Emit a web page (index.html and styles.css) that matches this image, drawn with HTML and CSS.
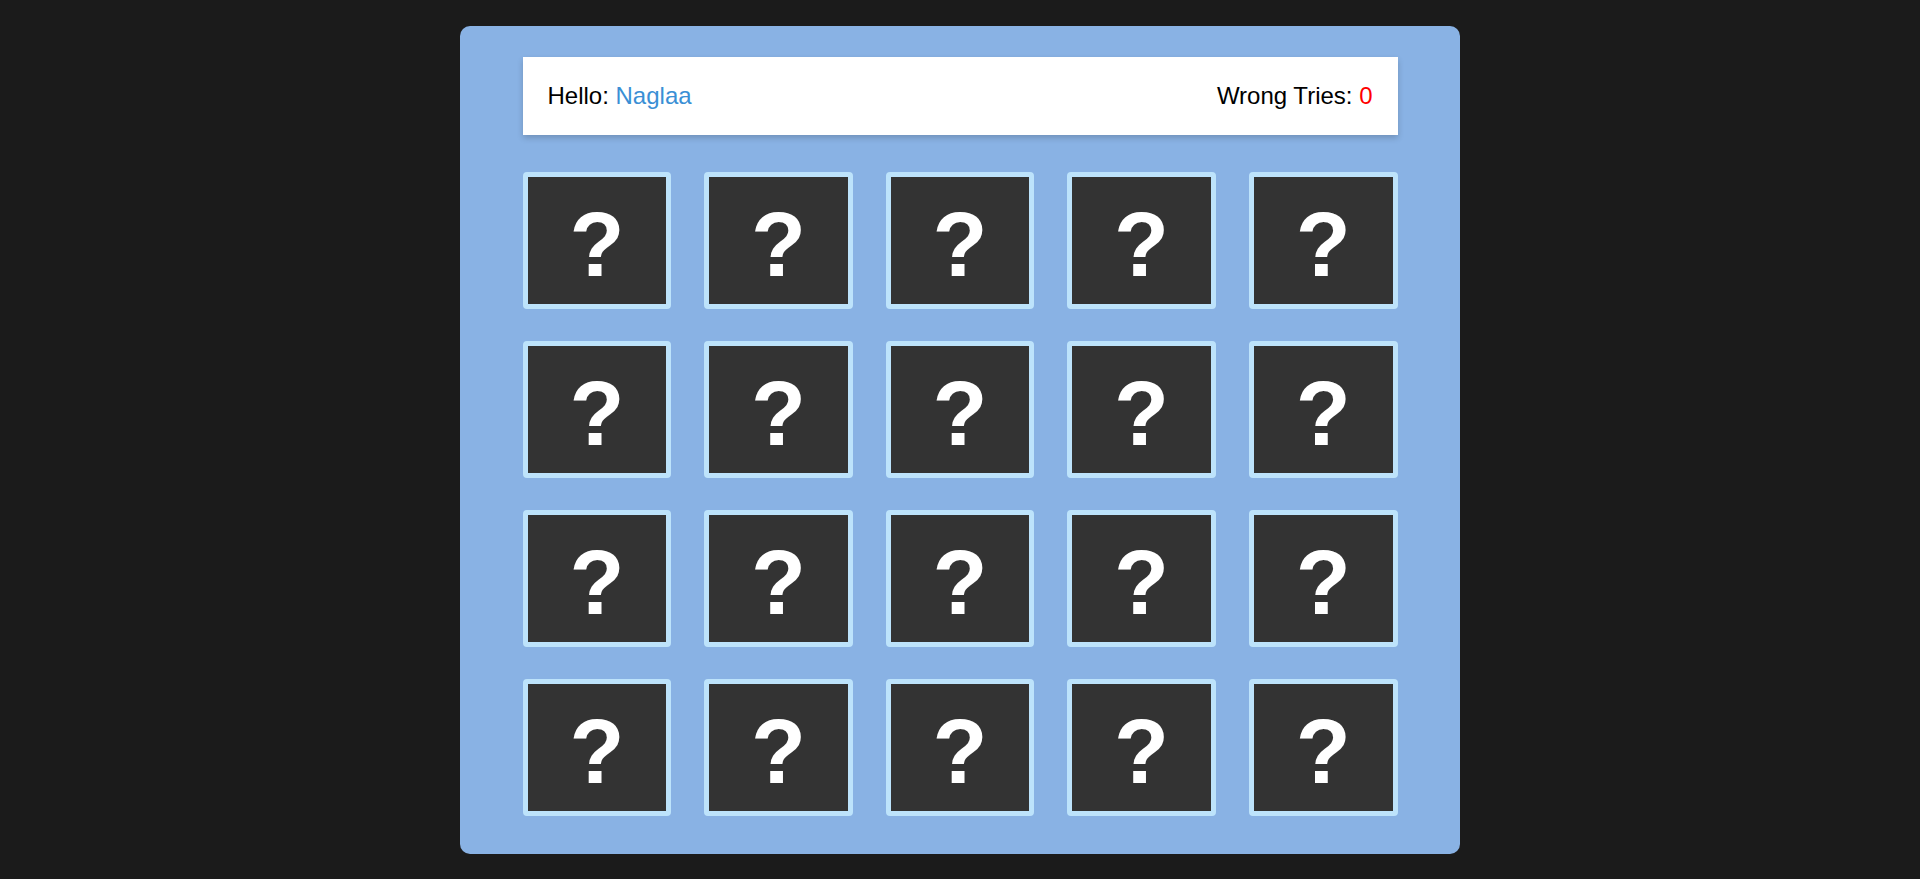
FILE: index.html
```html
<!DOCTYPE html>
<html lang="en">
<head>
<meta charset="utf-8">
<title>Memory Game</title>
<link rel="stylesheet" href="styles.css">
</head>
<body>
<div class="game">
  <div class="info">
    <div class="name">Hello: <span class="user">Naglaa</span></div>
    <div class="tries">Wrong Tries: <span class="count">0</span></div>
  </div>
  <div class="board">
    <div class="card"><span class="q">?</span></div>
    <div class="card"><span class="q">?</span></div>
    <div class="card"><span class="q">?</span></div>
    <div class="card"><span class="q">?</span></div>
    <div class="card"><span class="q">?</span></div>
    <div class="card"><span class="q">?</span></div>
    <div class="card"><span class="q">?</span></div>
    <div class="card"><span class="q">?</span></div>
    <div class="card"><span class="q">?</span></div>
    <div class="card"><span class="q">?</span></div>
    <div class="card"><span class="q">?</span></div>
    <div class="card"><span class="q">?</span></div>
    <div class="card"><span class="q">?</span></div>
    <div class="card"><span class="q">?</span></div>
    <div class="card"><span class="q">?</span></div>
    <div class="card"><span class="q">?</span></div>
    <div class="card"><span class="q">?</span></div>
    <div class="card"><span class="q">?</span></div>
    <div class="card"><span class="q">?</span></div>
    <div class="card"><span class="q">?</span></div>
  </div>
</div>
</body>
</html>
```
FILE: styles.css
```css
* { box-sizing: border-box; }
html, body { margin: 0; padding: 0; }
body {
  background: #1b1b1b;
  font-family: "Liberation Sans", Arial, sans-serif;
  height: 879px;
  overflow: hidden;
}
.game {
  width: 1000px;
  margin: 26px auto 0;
  padding: 31px 0 38px;
  background: #89b2e4;
  border-radius: 10px;
}
.info {
  width: 875px;
  height: 78px;
  margin: 0 auto;
  padding: 0 25px;
  background: #fff;
  display: flex;
  justify-content: space-between;
  align-items: center;
  font-size: 24px;
  color: #000;
  box-shadow: 0 3px 6px rgba(0, 0, 0, 0.18);
}
.user { color: #3a8fd5; }
.count { color: #ff0000; }
.board {
  width: 875px;
  margin: 37px auto 0;
  display: flex;
  flex-wrap: wrap;
  justify-content: space-between;
  row-gap: 32px;
}
.card {
  width: 17%;
  height: 137px;
  background: #333333;
  border: 5px solid #bde3fb;
  border-radius: 4px;
  display: flex;
  justify-content: center;
  align-items: center;
  padding-top: 8px;
}
.q {
  color: #fff;
  font-weight: bold;
  font-size: 90px;
  line-height: 1;
}
```
